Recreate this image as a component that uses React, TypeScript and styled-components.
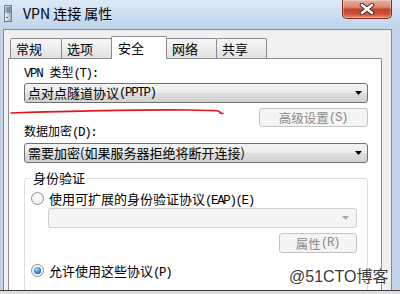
import React from "react";
import styled, { createGlobalStyle, css } from "styled-components";

const CJK = `"Noto Sans CJK SC", "Noto Sans", sans-serif`;

const GlobalStyle = createGlobalStyle`
  html, body { margin: 0; padding: 0; }
  body { width: 400px; height: 294px; overflow: hidden; font-family: ${CJK}; }
`;

const Window = styled.div`
  position: relative;
  width: 400px;
  height: 294px;
  display: flex;
  flex-direction: column;
  background: #c3d4e8;
  overflow: hidden;
  font-family: ${CJK};
  color: #000;
`;

const TitleBar = styled.div`
  height: 29px;
  flex: none;
  display: flex;
  align-items: flex-start;
  padding: 0 8px 0 4px;
  box-sizing: border-box;
  background: linear-gradient(to bottom, #dce8f6 0%, #cddef1 50%, #bfd3ea 100%);
`;

const AppIcon = styled.svg`
  margin-top: 5px;
  flex: none;
`;

const Title = styled.div`
  margin-left: 11px;
  font-size: 14px;
  line-height: 27px;
  color: #000;
`;

const CloseButton = styled.div`
  margin-left: auto;
  width: 50px;
  height: 19px;
  box-sizing: border-box;
  border: 1px solid #7b2c22;
  border-top: none;
  border-radius: 0 0 5px 5px;
  background: linear-gradient(
    to bottom,
    #eab0a2 0%,
    #dd8670 40%,
    #c4432a 52%,
    #cf5236 78%,
    #e48b72 100%
  );
  box-shadow: inset 0 0 0 1px rgba(255, 255, 255, 0.3);
  display: flex;
  align-items: center;
  justify-content: center;
`;

const Frame = styled.div`
  height: 262px;
  flex: none;
  display: flex;
  padding: 0 8px 0 3px;
  box-sizing: border-box;
  border-bottom: 1px solid #3c3c3c;
`;

const Bottom = styled.div`
  flex: 1;
  background: #dedede;
`;

const Client = styled.div`
  flex: 1;
  display: flex;
  flex-direction: column;
  border: 1px solid #7d8c9b;
  border-bottom: none;
  background: #f0f0f0;
  padding: 6px 9px 0 4px;
  overflow: hidden;
`;

const TabStrip = styled.div`
  height: 22px;
  flex: none;
  display: flex;
  align-items: flex-end;
  padding-left: 2px;
`;

const Tab = styled.div<{ $w: number; $active?: boolean }>`
  position: relative;
  width: ${(p) => p.$w}px;
  height: 20px;
  box-sizing: border-box;
  border: 1px solid #898c95;
  border-bottom: none;
  border-radius: 2px 2px 0 0;
  margin-left: -1px;
  padding: 1px 0 0 5px;
  font-size: 13px;
  line-height: 18px;
  white-space: nowrap;
  background: linear-gradient(to bottom, #f7f7f7 0%, #ececec 50%, #e0e0e0 100%);
  &:first-child {
    margin-left: 0;
  }
  ${(p) =>
    p.$active &&
    css`
      height: 23px;
      margin-bottom: -1px;
      z-index: 1;
      padding-top: 0;
      line-height: 21px;
      background: #fff;
      padding-left: 6px;
    `}
`;

const Panel = styled.div`
  flex: 1;
  display: flex;
  flex-direction: column;
  border: 1px solid #898c95;
  border-bottom: none;
  background: #fff;
  padding: 7px 13px 0 15px;
  overflow: hidden;
`;

const Mono = styled.span`
  font-family: "Liberation Mono", "DejaVu Sans Mono", monospace;
  font-size: 12.5px;
  letter-spacing: -1.4px;
  margin-right: 1px;
`;

const Label = styled.div<{ $mt: number }>`
  margin-top: ${(p) => p.$mt}px;
  font-size: 12px;
  line-height: 12px;
  height: 12px;
  white-space: nowrap;
`;

const Combo = styled.div<{ $mt: number }>`
  margin-top: ${(p) => p.$mt}px;
  height: 20px;
  flex: none;
  box-sizing: border-box;
  display: flex;
  align-items: center;
  padding: 0 5px 0 3px;
  border: 1px solid #707070;
  border-radius: 3px;
  background: linear-gradient(to bottom, #f3f3f3 0%, #ebebeb 50%, #dddddd 51%, #d2d2d2 100%);
  font-size: 13px;
  line-height: 18px;
  white-space: nowrap;
`;

const DisabledCombo = styled.div`
  margin: 2px 0 0 17px;
  height: 20px;
  flex: none;
  box-sizing: border-box;
  display: flex;
  align-items: center;
  justify-content: flex-end;
  padding: 0 7px 0 3px;
  border: 1px solid #d0d0d0;
  border-radius: 3px;
  background: #f4f4f4;
`;

const Arrow = styled.svg`
  margin-left: auto;
  flex: none;
`;

const ButtonRow = styled.div<{ $mt: number }>`
  margin-top: ${(p) => p.$mt}px;
  display: flex;
  justify-content: flex-end;
  flex: none;
`;

const DisabledButton = styled.div<{ $w: number; $h: number }>`
  width: ${(p) => p.$w}px;
  height: ${(p) => p.$h}px;
  box-sizing: border-box;
  border: 1px solid #c3c3c3;
  border-radius: 3px;
  background: #f4f4f4;
  color: #8a8a8a;
  font-size: 12.5px;
  display: flex;
  align-items: center;
  justify-content: center;
  white-space: nowrap;
`;

const GroupBox = styled.div`
  margin-top: 15px;
  height: 150px;
  flex: none;
  display: flex;
  flex-direction: column;
  border: 1px solid #d5dfe5;
  border-radius: 3px;
  padding: 0 10px 0 6px;
`;

const GroupLegend = styled.div`
  align-self: flex-start;
  margin-top: -10px;
  padding: 0 2px;
  background: #fff;
  font-size: 13px;
  line-height: 17px;
`;

const RadioRow = styled.div<{ $mt: number }>`
  margin-top: ${(p) => p.$mt}px;
  height: 16px;
  display: flex;
  align-items: center;
  gap: 5px;
  font-size: 13px;
  white-space: nowrap;
`;

const RadioCircle = styled.span<{ $checked?: boolean }>`
  position: relative;
  width: 13px;
  height: 13px;
  box-sizing: border-box;
  flex: none;
  border-radius: 50%;
  border: 1px solid #8b9097;
  background: radial-gradient(circle at 50% 40%, #ffffff 0%, #f0f0f0 50%, #d6d6d6 100%);
  box-shadow: inset 0 0 0 1px #f8f8f8;
  ${(p) =>
    p.$checked &&
    css`
      &::after {
        content: "";
        position: absolute;
        left: 2px;
        top: 2px;
        width: 7px;
        height: 7px;
        border-radius: 50%;
        background: radial-gradient(circle at 40% 35%, #bfe6ff 0%, #3f9be6 40%, #0f57ae 80%, #0b3f86 100%);
      }
    `}
`;

const Watermark = styled.div`
  position: absolute;
  left: 289px;
  top: 268px;
  font-family: "Liberation Sans", ${CJK};
  font-size: 16px;
  line-height: 18px;
  color: #3a3a3a;
  text-shadow: 0 0 2px #ffffff, 0 0 2px #ffffff;
  white-space: nowrap;
`;

const Annotation = styled.svg`
  position: absolute;
  left: 0;
  top: 0;
  pointer-events: none;
`;

const DownArrow = ({ color }: { color: string }) => (
  <Arrow width="7" height="4" viewBox="0 0 7 4">
    <polygon points="0,0 7,0 3.5,4" fill={color} />
  </Arrow>
);

export default function App() {
  return (
    <>
      <GlobalStyle />
      <Window>
        <TitleBar>
          <AppIcon width="8" height="17" viewBox="0 0 8 17">
            <defs>
              <linearGradient id="ig" x1="0" y1="0" x2="1" y2="0">
                <stop offset="0" stopColor="#f2f5f9" />
                <stop offset="1" stopColor="#9eabba" />
              </linearGradient>
            </defs>
            <rect x="0.5" y="0.5" width="7" height="16" fill="url(#ig)" stroke="#6f7d8d" />
            <line x1="1.5" y1="3" x2="6.5" y2="3" stroke="#3f5068" />
            <line x1="1.5" y1="5" x2="6.5" y2="5" stroke="#3f5068" />
            <line x1="1.5" y1="7" x2="6.5" y2="7" stroke="#3f5068" />
            <rect x="2" y="12" width="2" height="1" fill="#4a8a3a" />
          </AppIcon>
          <Title>VPN 连接 属性</Title>
          <CloseButton>
            <svg width="16" height="12" viewBox="0 0 16 12">
              <path d="M3 2 L13 10 M13 2 L3 10" stroke="#4b2a24" strokeWidth="4.6" strokeLinecap="round" />
              <path d="M3 2 L13 10 M13 2 L3 10" stroke="#ffffff" strokeWidth="2.6" strokeLinecap="round" />
            </svg>
          </CloseButton>
        </TitleBar>
        <Frame>
          <Client>
            <TabStrip>
              <Tab $w={52}>常规</Tab>
              <Tab $w={51}>选项</Tab>
              <Tab $w={56} $active>
                安全
              </Tab>
              <Tab $w={51}>网络</Tab>
              <Tab $w={51}>共享</Tab>
            </TabStrip>
            <Panel>
              <Label $mt={0}>
                <Mono>VPN </Mono>类型<Mono>(T):</Mono>
              </Label>
              <Combo $mt={5}>
                点对点隧道协议<Mono>(PPTP)</Mono>
                <DownArrow color="#000" />
              </Combo>
              <ButtonRow $mt={5}>
                <DisabledButton $w={109} $h={19}>
                  高级设置<Mono>(S)</Mono>
                </DisabledButton>
              </ButtonRow>
              <Label $mt={-2}>
                数据加密<Mono>(D):</Mono>
              </Label>
              <Combo $mt={6}>
                需要加密(如果服务器拒绝将断开连接)
                <DownArrow color="#000" />
              </Combo>
              <GroupBox>
                <GroupLegend>身份验证</GroupLegend>
                <RadioRow $mt={4}>
                  <RadioCircle />
                  <span>
                    使用可扩展的身份验证协议<Mono>(EAP)(E)</Mono>
                  </span>
                </RadioRow>
                <DisabledCombo>
                  <DownArrow color="#a8a8a8" />
                </DisabledCombo>
                <ButtonRow $mt={5}>
                  <DisabledButton $w={78} $h={20}>
                    属性<Mono>(R)</Mono>
                  </DisabledButton>
                </ButtonRow>
                <RadioRow $mt={9}>
                  <RadioCircle $checked />
                  <span>
                    允许使用这些协议<Mono>(P)</Mono>
                  </span>
                </RadioRow>
              </GroupBox>
            </Panel>
          </Client>
        </Frame>
        <Bottom />
        <Annotation width="400" height="294" viewBox="0 0 400 294">
          <path
            d="M11 113 C 60 111.5, 140 109.5, 188 110 S 212 112, 223 113.5"
            fill="none"
            stroke="#e3171b"
            strokeWidth="1.6"
            strokeLinecap="round"
          />
        </Annotation>
        <Watermark>@51CTO博客</Watermark>
      </Window>
    </>
  );
}
